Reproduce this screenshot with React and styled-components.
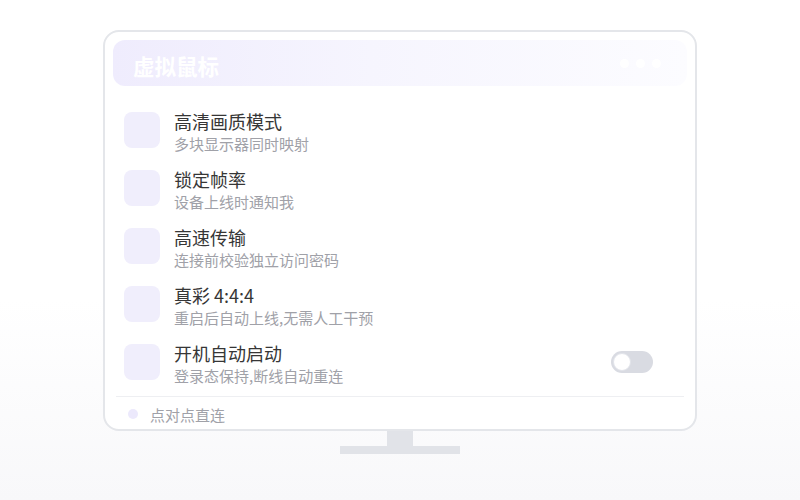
import styled, { createGlobalStyle } from "styled-components";

const GlobalStyle = createGlobalStyle`
   html, body {
      margin: 0;
      padding: 0;
      background: #ffffff;
   }
   * {
      box-sizing: border-box;
   }
`;

const Page = styled.div`
   width: 800px;
   height: 500px;
   display: flex;
   flex-direction: column;
   align-items: center;
   padding-top: 30px;
   background: linear-gradient(180deg, #ffffff 0%, #ffffff 60%, #f8f8fa 100%);
   font-family: "Noto Sans CJK SC", "Noto Sans", sans-serif;
`;

const Monitor = styled.div`
   width: 594px;
   height: 401px;
   border: 2px solid #e4e6ea;
   border-radius: 16px;
   background: #ffffff;
   padding: 8px 8px 0 8px;
   display: flex;
   flex-direction: column;
   overflow: hidden;
`;

const Header = styled.div`
   flex-shrink: 0;
   height: 46px;
   border-radius: 12px;
   background: linear-gradient(90deg, #efecfd 0%, #f6f5fe 45%, #fcfcff 100%);
   display: flex;
   align-items: center;
   justify-content: space-between;
   padding: 5px 26px 0 20px;
   & h1 {
      margin: 0;
      font-size: 21.5px;
      line-height: 26px;
      font-weight: 700;
      color: #ffffff;
   }
`;

const Dots = styled.div`
   display: flex;
   gap: 7px;
   margin-top: -5px;
   & span {
      width: 9px;
      height: 9px;
      border-radius: 50%;
      background: #ffffff;
   }
`;

const List = styled.div`
   flex-shrink: 0;
   display: flex;
   flex-direction: column;
   gap: 14px;
   padding: 24px 34px 0 11px;
`;

const Row = styled.div`
   display: flex;
   align-items: flex-start;
   gap: 14px;
`;

const IconBox = styled.div`
   width: 36px;
   height: 36px;
   margin-top: 2px;
   border-radius: 8px;
   background: #f0eefc;
   flex-shrink: 0;
`;

const Text = styled.div`
   flex: 1;
   display: flex;
   flex-direction: column;
   & h3 {
      margin: 0;
      font-size: 18px;
      line-height: 22px;
      font-weight: 400;
      color: #363636;
   }
   & p {
      margin: 2px 0 0;
      font-size: 15px;
      line-height: 20px;
      color: #a0a1a8;
   }
`;

const Toggle = styled.div`
   width: 42px;
   height: 22px;
   margin-top: 9px;
   border-radius: 11px;
   background: #d9dbe2;
   padding: 2px;
   display: flex;
   & span {
      width: 18px;
      height: 18px;
      border-radius: 50%;
      background: #ffffff;
      border: 1px solid #e2e4ea;
   }
`;

const Divider = styled.div`
   flex-shrink: 0;
   height: 1px;
   background: #eeeff2;
   margin: 10px 3px 0;
`;

const Footer = styled.div`
   flex-shrink: 0;
   height: 32px;
   display: flex;
   align-items: center;
   gap: 12px;
   padding: 2px 0 0 15px;
   font-size: 15px;
   color: #a0a1a8;
   & i {
      width: 10px;
      height: 10px;
      border-radius: 50%;
      background: #ece9fc;
   }
`;

const Neck = styled.div`
   width: 26px;
   height: 15px;
   background: #e1e3e8;
`;

const Base = styled.div`
   width: 120px;
   height: 8px;
   background: #e1e3e8;
`;

const items = [
   { title: "高清画质模式", desc: "多块显示器同时映射" },
   { title: "锁定帧率", desc: "设备上线时通知我" },
   { title: "高速传输", desc: "连接前校验独立访问密码" },
   { title: "真彩 4:4:4", desc: "重启后自动上线,无需人工干预" },
   { title: "开机自动启动", desc: "登录态保持,断线自动重连", toggle: true },
];

export default function App() {
   return (
      <>
         <GlobalStyle />
         <Page>
            <Monitor>
               <Header>
                  <h1>虚拟鼠标</h1>
                  <Dots>
                     <span />
                     <span />
                     <span />
                  </Dots>
               </Header>
               <List>
                  {items.map((item) => (
                     <Row key={item.title}>
                        <IconBox />
                        <Text>
                           <h3>{item.title}</h3>
                           <p>{item.desc}</p>
                        </Text>
                        {item.toggle && (
                           <Toggle>
                              <span />
                           </Toggle>
                        )}
                     </Row>
                  ))}
               </List>
               <Divider />
               <Footer>
                  <i />
                  点对点直连
               </Footer>
            </Monitor>
            <Neck />
            <Base />
         </Page>
      </>
   );
}
